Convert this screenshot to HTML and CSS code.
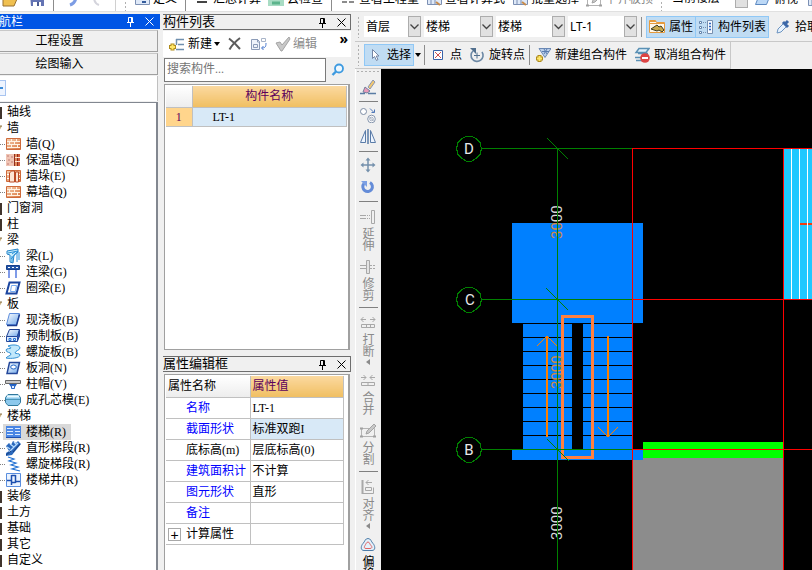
FILE: index.html
```html
<!DOCTYPE html>
<html lang="zh-CN">
   <head>
      <meta charset="UTF-8" />
      <meta name="viewport" content="width=device-width, initial-scale=1.0"/>
      <title>绘图输入 - 楼梯</title>
      <link rel="stylesheet" href="styles.css">
   </head>
   <body>
      <!-- shared icons -->
      <svg class="sprite" width="0" height="0">
         <defs>
            <linearGradient id="blueFill" x1="0" y1="0" x2="1" y2="1">
               <stop offset="0" stop-color="#ffffff"/>
               <stop offset="1" stop-color="#6fa8ea"/>
            </linearGradient>
            <linearGradient id="brickFill" x1="0" y1="0" x2="1" y2="1">
               <stop offset="0" stop-color="#f6d2b4"/>
               <stop offset="1" stop-color="#d9743c"/>
            </linearGradient>
         </defs>
         <symbol id="pin" viewBox="0 0 9 11"><path d="M2.5 6V1.5h4V6M1 6.5h7M4.5 7v4M5.5 1.5V6" fill="none" stroke="currentColor"/></symbol>
         <symbol id="close" viewBox="0 0 9 9"><path d="M.5.5l8 8M8.5.5l-8 8" fill="none" stroke="currentColor"/></symbol>
         <symbol id="chevron" viewBox="0 0 9 6"><path d="M.5.5l4 4 4-4" fill="none" stroke="#444" stroke-width="1.3"/></symbol>
         <symbol id="folder" viewBox="0 0 16 16"><path d="M2 3h13v11H2z" fill="#d8b878"/><path d="M13 3h3v12h-3z" fill="#40342c"/></symbol>
         <symbol id="folder-open" viewBox="0 0 16 16"><path d="M3 6h13l-4 7H3z" fill="#c8b080"/><path d="M3 6h13" stroke="#8a744c"/></symbol>
         <symbol id="wall" viewBox="0 0 16 16"><path d="M1.500 2.500h14v11h-14z" fill="url(#brickFill)" stroke="#cf6a3a"/><path d="M2 5.500h13M2 8.500h13M2 11.500h13M6.500 3v2.500M11.500 3v2.500M4.500 6v2.500M9.500 6v2.500M6.500 9v2.500M12.500 9v2.500" stroke="#fff3e4"/></symbol>
         <symbol id="wall-warm" viewBox="0 0 16 16"><path d="M1 2h8v12H1z" fill="#f0c4b4"/><path d="M2 3h2v2H2zM6 4h2v2H6zM3 7h2v2H3zM6 9h2v2H6zM2 11h2v2H2z" fill="#d8a094"/><path d="M9.500 2v12M12.500 2v12" stroke="#902c1c" stroke-width="1"/><path d="M13 2h2v12h-2z" fill="#d05c3c"/><path d="M10 2h2v12h-2z" fill="#e08a5c"/><path d="M10 5.500h5M10 9.500h5" stroke="#ffe6d6"/></symbol>
         <symbol id="wall-pier" viewBox="0 0 16 16"><path d="M1.500 2.500h14v11h-14z" fill="url(#brickFill)" stroke="#cf6a3a"/><path d="M2 6.500h13M2 10.500h13" stroke="#fff"/><path d="M4.500 14V5l2-2h3v11zM10.500 14V4h3v10z" fill="#fde6d4" stroke="#bb4b26"/></symbol>
         <symbol id="beam" viewBox="0 0 16 16"><path d="M2 3l11-2v3l-4 3-1 8-3-1V7L2 6z" fill="#c9eefc" stroke="#2583c8"/><path d="M3 5l10-2M7 6l4-3M7 8v6M12 5v9M14 4v8M6 11l7-8" fill="none" stroke="#2b91d9"/></symbol>
         <symbol id="beam-link" viewBox="0 0 16 16"><path d="M1.500 1.500h13v4h-13z" fill="#2456a8" stroke="#16408c"/><path d="M3 3.500h2M7 3.500h2M11 3.500h2" stroke="#fff"/><path d="M4 6v8M11 6v8" stroke="#7f9be8" stroke-width="2"/></symbol>
         <symbol id="beam-ring" viewBox="0 0 16 16"><path d="M4.500 2.500h10l-3 11h-10z" fill="#fff" stroke="#1b46a0" stroke-width="2"/><path d="M6.500 5.500h5l-1 6h-5z" fill="none" stroke="#75aaf0"/></symbol>
         <symbol id="slab" viewBox="0 0 16 16"><path d="M4.500 1.500h10l-3 11h-10z" fill="url(#blueFill)" stroke="#5c8cdc"/><path d="M2 13.500h9.500l3-11" fill="none" stroke="#1b3c90" stroke-width="1.500"/></symbol>
         <symbol id="slab-pre" viewBox="0 0 16 16"><path d="M4.500 1.500h10l-2 7h-11z" fill="url(#blueFill)" stroke="#1b3c90"/><path d="M1.500 8.500h11v5h-11z" fill="#dceafd" stroke="#24489a"/><path d="M12.500 8l2-6v6l-2 5" fill="#2b55b4" stroke="#24489a"/><path d="M4 10.500h2v2H4zM8.500 10.500h2v2h-2z" fill="none" stroke="#2575d6"/></symbol>
         <symbol id="slab-spiral" viewBox="0 0 16 16"><path d="M3 2c5-2 12-1 12 2 0 2-5 3-5 5 0 1 5 0 5 2 0 3-9 4-14 3 1-2 5-2 5-4 0-2-5-1-5-4 0-2 5-1 5-2 0-1-2-1-3-2z" fill="#c2e8fb" stroke="#3390d4"/></symbol>
         <symbol id="slab-hole" viewBox="0 0 16 16"><path d="M4.500 2.500h10l-2.500 11h-10z" fill="url(#blueFill)" stroke="#24489a" stroke-width="1.500"/><ellipse cx="8.500" cy="7" rx="2.800" ry="2" fill="#fff" stroke="#2166c8"/></symbol>
         <symbol id="col-cap" viewBox="0 0 16 16"><path d="M.500 4.500h15v3h-15z" fill="#c8c8c8" stroke="#686868"/><path d="M4 8h8l-2 3H6z" fill="#1d5fc4"/><path d="M6.500 9.500h3v3h-3z" fill="#e4f0ff" stroke="#2b66c4"/></symbol>
         <symbol id="core-mold" viewBox="0 0 16 16"><path d="M3 2.500h10l2.500 3v5l-2.500 3H3l-2.500-3v-5z" fill="#8cc8ec" stroke="#31789c"/><path d="M2 4.500h12" stroke="#e9faff" stroke-width="2"/><path d="M1 7.500h14" stroke="#4a96b8"/></symbol>
         <symbol id="stair" viewBox="0 0 16 16"><path d="M1 2h15v12H1z" fill="#4a86e4"/><path d="M2 4.500h6M2 7.500h6M2 10.500h6M10 4.500h5M10 7.500h5M10 10.500h5" stroke="#dcebff"/><path d="M1 13.500h15" stroke="#1d4fb0"/></symbol>
         <symbol id="stair-straight" viewBox="0 0 16 16"><path d="M1 6l3-3 2 2 2-4 3 2 2-2 3 3-9 11-6 1v-3l3-2z" fill="#2a68bc"/><path d="M2 7l3 2M5 4l4 3M9 2l3 3M4 12l9-9" stroke="#b8dcff" stroke-width="1.200"/><path d="M1 15l5-4M8 12l7-8" stroke="#173e80"/></symbol>
         <symbol id="stair-spiral" viewBox="0 0 16 16"><path d="M3 1l6 2-5 2 7 2-5 2 7 2-6 2 8 2" fill="none" stroke="#1f6fd2" stroke-width="1.200"/></symbol>
         <symbol id="stair-well" viewBox="0 0 16 16"><path d="M1.500 1.500h14v13h-14z" fill="#eaf3ff" stroke="#5a8ede"/><path d="M6.500 3v10M10.500 3v8M6.500 3.500h4M2 8.500h4M6.500 10.500h4M11 9.500h4" stroke="#1c4fae" stroke-width="1.500"/></symbol>
         <symbol id="new" viewBox="0 0 18 16"><path d="M8 3.500h8M10 8.500h6M8 13.500h8M8.500 3v6" stroke="#6f8fae" stroke-width="1.500"/><path d="M4.500 7.500v7M1 11h7" stroke="#b08c1c" stroke-width="4"/><path d="M4.500 8.500v5M2 11h5" stroke="#ffe76a" stroke-width="2"/></symbol>
         <symbol id="delete" viewBox="0 0 16 16"><path d="M2 2.500c4 3 8 7 11 10.500M13 2C9 5 5 9 2.500 13.500" fill="none" stroke="#5c5c5c" stroke-width="2"/></symbol>
         <symbol id="copy-item" viewBox="0 0 18 16"><path d="M1.500 3.500h6l2 2v8h-8zM7.500 3v3h2" fill="#eef3fb" stroke="#8c9cb8"/><path d="M3.500 8.500h4v3h-4z" fill="none" stroke="#8c9cb8"/><path d="M11.500 2.500h4v3h-4z" fill="none" stroke="#a8b4c8"/><path d="M16 7c0 4-1 5-4 5M13.500 10L11.500 12l2 2" fill="none" stroke="#4a7ad0"/></symbol>
         <symbol id="check" viewBox="0 0 16 16"><path d="M1 7l4-1 2 3 7-8 1 2-8 12H6z" fill="#c8c8c8" stroke="#a4a4a4"/></symbol>
         <symbol id="search" viewBox="0 0 16 16"><circle cx="9" cy="6.500" r="4" fill="#eef8ff" stroke="#3d9ae0" stroke-width="1.800"/><path d="M6 9.500L2.500 13" stroke="#3d9ae0" stroke-width="2.400"/></symbol>
         <symbol id="cursor" viewBox="0 0 16 16"><path d="M5.500 2.500v9l2-2 2 4 1.500-1-1.800-3.500H12z" fill="#fff" stroke="#7486a4"/></symbol>
         <symbol id="point" viewBox="0 0 16 16"><path d="M3.500 3.500h9v9h-9z" fill="#fff" stroke="#3a62a8"/><path d="M5 5l6 6M11 5l-6 6" stroke="#d05050"/></symbol>
         <symbol id="rotate-point" viewBox="0 0 16 16"><path d="M4 4a6 6 0 1 0 9 1" fill="none" stroke="#6c88a4" stroke-width="1.600"/><path d="M1 1h6v6z" fill="#52708e"/><path d="M8 5.500v6M5 8.500h6" stroke="#52708e"/></symbol>
         <symbol id="combine" viewBox="0 0 16 16"><path d="M4 1.500h12l-6 9z" fill="#bcd0ea" stroke="#6a88b4"/><path d="M7 4.500h7M9 2l3 5M12 2L9 7" stroke="#5a7cb0"/><path d="M4.500 8v7M1 11.500h7" stroke="#b08c1c" stroke-width="4"/><path d="M4.500 9v5M2 11.500h5" stroke="#ffe76a" stroke-width="2"/></symbol>
         <symbol id="uncombine" viewBox="0 0 16 16"><path d="M5 1.500h10l-3 4H2zM4 6.500h10M1 10.500h8M2 13.500h6" fill="#dff0fb" stroke="#5a90b4" stroke-width="1.500"/><circle cx="11" cy="11" r="4.800" fill="#dc4444"/><path d="M8 11h6" stroke="#fff" stroke-width="2"/></symbol>
         <symbol id="props" viewBox="0 0 16 16"><path d="M.500 1.500h6l1 2h8v10h-15z" fill="#fff7e8" stroke="#e59a3c"/><path d="M1 2.500h6M1 4.500h14" stroke="#e59a3c"/><path d="M2 10l6-4 2 2 2-1 3 4-2 2-3-2-2 1z" fill="#c8a84c" stroke="#3c3c24"/></symbol>
         <symbol id="list" viewBox="0 0 16 16"><path d="M1.500 2.500h2v2h-2zM1.500 7.500h2v2h-2zM1.500 12.500h2v2h-2z" fill="#fff" stroke="#6484ac"/><path d="M5 3.500h3M5 8.500h3M5 13.500h3" stroke="#7890b0" stroke-dasharray="1 1"/><path d="M9.500 1.500h5v13h-5z" fill="#f6faff" stroke="#7890b0"/><path d="M11 4.500h2M11 7.500h2M11 10.500h2" stroke="#2f66c0" stroke-width="1.500"/></symbol>
         <symbol id="dropper" viewBox="0 0 16 16"><path d="M2 14l1-4 6-6 3 3-6 6z" fill="#e8f3ff" stroke="#6c94c0"/><path d="M8 3l5 5M10 5l3-3" stroke="#3c68a8" stroke-width="3"/></symbol>
         <symbol id="brush" viewBox="0 0 16 16"><path d="M8 8l5-7 2 2-5 7z" fill="#f2c870" stroke="#8c96b0"/><path d="M5 8l5 4-3 2-4-1z" fill="#e89aba" stroke="#74809c"/><path d="M0 14.500h5M8 14.500h8" stroke="#5a7ca4" stroke-width="1.500"/></symbol>
         <symbol id="copy" viewBox="0 0 16 16"><circle cx="3.500" cy="4.500" r="3" fill="#fff" stroke="#7c8ca4"/><circle cx="11.500" cy="12" r="3.800" fill="#fff" stroke="#8494ac"/><circle cx="11.500" cy="12" r="1.800" fill="none" stroke="#a4aebe"/><path d="M9 9.500l5 5" stroke="#a4aebe"/><path d="M10 1.500l4 4M14.500 2.500v3h-3" fill="none" stroke="#5078b8"/></symbol>
         <symbol id="mirror" viewBox="0 0 16 16"><path d="M5.500 1.500v12h-5zM10.500 1.500v12h5z" fill="#eef5ff" stroke="#5a7ca8"/><path d="M8 0v15" stroke="#5a7ca8" stroke-width="1.500"/></symbol>
         <symbol id="move" viewBox="0 0 16 16"><path d="M8 2v12M2 8h12" stroke="#7490ac" stroke-width="1.500"/><path d="M5.500 3.500l2.500-3 2.500 3zM5.500 12.500l2.500 3 2.500-3zM3.500 5.500L.5 8l3 2.500zM12.500 5.500l3 2.500-3 2.500z" fill="#7490ac"/></symbol>
         <symbol id="rotate" viewBox="0 0 16 16"><path d="M4 4.500a4.800 4.800 0 1 0 6-1" fill="none" stroke="#648cd8" stroke-width="3"/><path d="M1 2h6v6z" fill="#7ca0e4"/></symbol>
         <symbol id="extend" viewBox="0 0 16 16"><path d="M11.500 1.500h3v13h-3z" fill="none" stroke="#a8a8a8"/><path d="M0 6.500h6M0 9.500h6" stroke="#a8a8a8"/><path d="M7 6.500h4M7 9.500h4" stroke="#a8a8a8" stroke-dasharray="1 1"/></symbol>
         <symbol id="trim" viewBox="0 0 16 16"><path d="M6.500 1.500h3v13h-3z" fill="#e4e4e4" stroke="#a8a8a8"/><path d="M0 6.500h6M0 9.500h6" stroke="#a8a8a8"/><path d="M10 6.500h6M10 9.500h6" stroke="#a8a8a8" stroke-dasharray="2 1"/></symbol>
         <symbol id="break" viewBox="0 0 16 16"><path d="M1 4.500h5M3.500 2L1 4.500 3.500 7M10 4.500h5M12.500 2L15 4.500 12.500 7" fill="none" stroke="#a8a8a8"/><path d="M1.500 9.500h13v3h-13zM6.500 10v2M10.500 10v2" fill="none" stroke="#a8a8a8"/></symbol>
         <symbol id="join" viewBox="0 0 16 16"><path d="M1 4.500h5M3.500 2L6 4.500 3.500 7M10 4.500h5M12.500 2L10 4.500 12.500 7" fill="none" stroke="#a8a8a8"/><path d="M1.500 9.500h13v3h-13zM8 10v2" fill="none" stroke="#a8a8a8"/></symbol>
         <symbol id="split" viewBox="0 0 16 16"><path d="M1.500 5.500h13v8h-13z" fill="none" stroke="#b4b4b4"/><path d="M0 5.500h3M0 13.500h3M13 13.500h3" stroke="#a0a0a0" stroke-width="2"/><path d="M6 11l1-3 7-7 2 2-7 7z" fill="#c8c8c8" stroke="#a4a4a4"/></symbol>
         <symbol id="align" viewBox="0 0 16 16"><path d="M2.500 1v14" stroke="#a8a8a8" stroke-width="2"/><path d="M6 3.500h6M8.500 1L6 3.500 8.500 6" fill="none" stroke="#a8a8a8"/><path d="M5.500 8.500h6v3h-6zM3 14.500h10.500v-6" fill="none" stroke="#a8a8a8"/></symbol>
         <symbol id="offset" viewBox="0 0 16 16"><path d="M8 1.500c3 0 3 3 5 5s3 7-1 7H4c-4 0-3-5-1-7s2-5 5-5z" fill="#e4f1fb" stroke="#4c7ca8"/><path d="M8 5c1.500 0 1.500 2 3 3.500s1 3-1 3H6c-2 0-2-1.500-1-3S6.500 5 8 5z" fill="none" stroke="#e06464"/></symbol>
         <symbol id="sheet" viewBox="0 0 16 16"><path d="M1.500 4.500h14v8h-14zM5 4v8M9 4v8" fill="#dfe9f8" stroke="#7c90b4"/><path d="M10 10l4 3" stroke="#c88c4c" stroke-width="2"/></symbol>
         <symbol id="define" viewBox="0 0 16 16"><path d="M1.500 3.500h14v9h-14z" fill="#dfe9f8" stroke="#7c90b4"/><path d="M8 9h4v2H8z" fill="#345c9c"/></symbol>
         <symbol id="cube" viewBox="0 0 16 16"><path d="M4.500 2.500h11l-4 10h-11z" fill="#bcd8f6" stroke="#5c88c0"/></symbol>
         <symbol id="cloud" viewBox="0 0 16 16"><path d="M0 1h16v13H0z" fill="#a8dcc4"/><path d="M4 11h8" stroke="#5cb48c" stroke-width="3"/></symbol>
         <symbol id="sum" viewBox="0 0 16 16"><path d="M3 10h10" stroke="#444" stroke-width="2"/></symbol>
         <symbol id="binoculars" viewBox="0 0 16 16"><path d="M2 9h5v2H2zM9 9h5v2H9z" fill="#8c8c8c"/></symbol>
         <symbol id="save" viewBox="0 0 16 16"><path d="M2 1h14v12H3z" fill="#6474b4"/><path d="M5 9h8v4H5z" fill="#fff"/><path d="M9 9h2v4H9z" fill="#4c5c94"/></symbol>
         <symbol id="open" viewBox="0 0 16 16"><path d="M1 6h14l-3 7H1z" fill="#f0c050" stroke="#987030"/></symbol>
         <symbol id="undo" viewBox="0 0 16 16"><path d="M12 3c0 5-3 8-6 9" fill="none" stroke="#7c9ce4" stroke-width="3"/></symbol>
         <symbol id="redo" viewBox="0 0 16 16"><path d="M4 4c0 4 2 7 5 8" fill="none" stroke="#d4d4dc" stroke-width="2"/></symbol>
      </svg>

      <header class="topbar">
         <button class="tool icon-only" aria-label="打开"><svg class="icon"><use href="#open"/></svg></button>
         <button class="tool icon-only" aria-label="保存"><svg class="icon"><use href="#save"/></svg></button>
         <span class="sep"></span>
         <button class="tool icon-only" aria-label="撤销"><svg class="icon"><use href="#undo"/></svg></button>
         <button class="tool icon-only" aria-label="恢复"><svg class="icon"><use href="#redo"/></svg></button>
         <span class="sep light"></span>
         <span class="grip"></span>
         <button class="tool"><svg class="icon"><use href="#define"/></svg>定义</button>
         <span class="sep"></span>
         <button class="tool"><svg class="icon"><use href="#sum"/></svg>汇总计算</button>
         <button class="tool"><svg class="icon"><use href="#cloud"/></svg>云检查</button>
         <span class="sep"></span>
         <button class="tool"><svg class="icon"><use href="#binoculars"/></svg>查看工程量</button>
         <button class="tool"><svg class="icon"><use href="#sheet"/></svg>查看计算式</button>
         <button class="tool"><svg class="icon"><use href="#sheet"/></svg>批量选择</button>
         <button class="tool" disabled><svg class="icon"><use href="#split"/></svg>平齐板顶</button>
         <span class="grip"></span>
         <span class="combo">
            <select aria-label="显示范围"><option>当前楼层</option></select>
            <span class="arrow"></span>
         </span>
         <button class="tool"><svg class="icon"><use href="#cube"/></svg>俯视</button>
         <button class="tool icon-only" aria-label="动态观察"><svg class="icon"><use href="#sheet"/></svg></button>
      </header>

      <div class="workspace">
         <aside class="navigator">
            <div class="nav-title">
               <h2>模块导航栏</h2>
               <button aria-label="固定"><svg width="9" height="11"><use href="#pin"/></svg></button>
               <button aria-label="关闭"><svg width="9" height="9"><use href="#close"/></svg></button>
            </div>
            <button class="nav-section">工程设置</button>
            <button class="nav-section">绘图输入</button>
            <div class="nav-tools"><button class="collapse" aria-label="全部折叠"></button></div>
            <ul class="tree">
               <li class="group"><a href="#"><svg class="icon"><use href="#folder"/></svg>轴线</a></li>
               <li class="group"><a href="#"><svg class="icon"><use href="#folder-open"/></svg>墙</a>
                  <ul>
                     <li><a href="#"><svg class="icon"><use href="#wall"/></svg>墙(Q)</a></li>
                     <li><a href="#"><svg class="icon"><use href="#wall-warm"/></svg>保温墙(Q)</a></li>
                     <li><a href="#"><svg class="icon"><use href="#wall-pier"/></svg>墙垛(E)</a></li>
                     <li><a href="#"><svg class="icon"><use href="#wall"/></svg>幕墙(Q)</a></li>
                  </ul>
               </li>
               <li class="group"><a href="#"><svg class="icon"><use href="#folder"/></svg>门窗洞</a></li>
               <li class="group"><a href="#"><svg class="icon"><use href="#folder"/></svg>柱</a></li>
               <li class="group"><a href="#"><svg class="icon"><use href="#folder-open"/></svg>梁</a>
                  <ul>
                     <li><a href="#"><svg class="icon"><use href="#beam"/></svg>梁(L)</a></li>
                     <li><a href="#"><svg class="icon"><use href="#beam-link"/></svg>连梁(G)</a></li>
                     <li><a href="#"><svg class="icon"><use href="#beam-ring"/></svg>圈梁(E)</a></li>
                  </ul>
               </li>
               <li class="group"><a href="#"><svg class="icon"><use href="#folder-open"/></svg>板</a>
                  <ul>
                     <li><a href="#"><svg class="icon"><use href="#slab"/></svg>现浇板(B)</a></li>
                     <li><a href="#"><svg class="icon"><use href="#slab-pre"/></svg>预制板(B)</a></li>
                     <li><a href="#"><svg class="icon"><use href="#slab-spiral"/></svg>螺旋板(B)</a></li>
                     <li><a href="#"><svg class="icon"><use href="#slab-hole"/></svg>板洞(N)</a></li>
                     <li><a href="#"><svg class="icon"><use href="#col-cap"/></svg>柱帽(V)</a></li>
                     <li><a href="#"><svg class="icon"><use href="#core-mold"/></svg>成孔芯模(E)</a></li>
                  </ul>
               </li>
               <li class="group"><a href="#"><svg class="icon"><use href="#folder-open"/></svg>楼梯</a>
                  <ul>
                     <li><a href="#" class="selected"><svg class="icon"><use href="#stair"/></svg>楼梯(R)</a></li>
                     <li><a href="#"><svg class="icon"><use href="#stair-straight"/></svg>直形梯段(R)</a></li>
                     <li><a href="#"><svg class="icon"><use href="#stair-spiral"/></svg>螺旋梯段(R)</a></li>
                     <li><a href="#"><svg class="icon"><use href="#stair-well"/></svg>楼梯井(R)</a></li>
                  </ul>
               </li>
               <li class="group"><a href="#"><svg class="icon"><use href="#folder"/></svg>装修</a></li>
               <li class="group"><a href="#"><svg class="icon"><use href="#folder"/></svg>土方</a></li>
               <li class="group"><a href="#"><svg class="icon"><use href="#folder"/></svg>基础</a></li>
               <li class="group"><a href="#"><svg class="icon"><use href="#folder"/></svg>其它</a></li>
               <li class="group"><a href="#"><svg class="icon"><use href="#folder"/></svg>自定义</a></li>
            </ul>
         </aside>

         <div class="panels">
            <section class="panel components">
               <div class="panel-title">
                  <h2>构件列表</h2>
                  <button aria-label="固定"><svg width="9" height="11"><use href="#pin"/></svg></button>
                  <button aria-label="关闭"><svg width="9" height="9"><use href="#close"/></svg></button>
               </div>
               <div class="panel-tools">
                  <button><svg width="18" height="16"><use href="#new"/></svg>新建<span class="caret"></span></button>
                  <button aria-label="删除"><svg class="icon"><use href="#delete"/></svg></button>
                  <button aria-label="复制"><svg width="18" height="16"><use href="#copy-item"/></svg></button>
                  <button disabled><svg class="icon"><use href="#check"/></svg>编辑</button>
                  <button class="more" aria-label="更多">»</button>
               </div>
               <div class="search">
                  <input type="text" aria-label="搜索构件" placeholder="搜索构件...">
                  <button aria-label="搜索"><svg class="icon"><use href="#search"/></svg></button>
               </div>
               <div class="box">
                  <table class="component-table">
                     <thead><tr><th class="num"></th><th>构件名称</th></tr></thead>
                     <tbody><tr><td class="num">1</td><td>LT-1</td></tr></tbody>
                  </table>
               </div>
            </section>
            <section class="panel properties">
               <div class="panel-title">
                  <h2>属性编辑框</h2>
                  <button aria-label="固定"><svg width="9" height="11"><use href="#pin"/></svg></button>
                  <button aria-label="关闭"><svg width="9" height="9"><use href="#close"/></svg></button>
               </div>
               <div class="box">
                  <table class="property-table">
                     <thead><tr><th>属性名称</th><th class="value">属性值</th></tr></thead>
                     <tbody>
                        <tr><td class="key">名称</td><td>LT-1</td></tr>
                        <tr><td class="key">截面形状</td><td class="active">标准双跑I</td></tr>
                        <tr><td>底标高(m)</td><td>层底标高(0)</td></tr>
                        <tr><td class="key">建筑面积计</td><td>不计算</td></tr>
                        <tr><td class="key">图元形状</td><td>直形</td></tr>
                        <tr><td class="key">备注</td><td></td></tr>
                        <tr><td class="expand"><button aria-label="展开">+</button>计算属性</td><td></td></tr>
                     </tbody>
                  </table>
               </div>
            </section>
         </div>

         <main class="drawing">
            <div class="toolbar">
               <span class="grip"></span>
               <span class="combo short">
                  <select aria-label="楼层"><option>首层</option></select>
                  <span class="arrow"><svg width="9" height="6"><use href="#chevron"/></svg></span>
               </span>
               <span class="combo">
                  <select aria-label="构件分类"><option>楼梯</option></select>
                  <span class="arrow"><svg width="9" height="6"><use href="#chevron"/></svg></span>
               </span>
               <span class="combo">
                  <select aria-label="构件类型"><option>楼梯</option></select>
                  <span class="arrow"><svg width="9" height="6"><use href="#chevron"/></svg></span>
               </span>
               <span class="combo">
                  <select aria-label="构件"><option>LT-1</option></select>
                  <span class="arrow"><svg width="9" height="6"><use href="#chevron"/></svg></span>
               </span>
               <span class="sep"></span>
               <div class="toggles">
                  <button class="tool on"><svg class="icon"><use href="#props"/></svg>属性</button>
                  <button class="tool on"><svg class="icon"><use href="#list"/></svg>构件列表</button>
               </div>
               <button class="tool"><svg class="icon"><use href="#dropper"/></svg>拾取构件</button>
            </div>
            <div class="toolbar modes">
               <span class="grip"></span>
               <button class="tool on pick"><svg class="icon"><use href="#cursor"/></svg>选择</button>
               <span class="caret"></span>
               <span class="sep"></span>
               <button class="tool"><svg class="icon"><use href="#point"/></svg>点</button>
               <button class="tool"><svg class="icon"><use href="#rotate-point"/></svg>旋转点</button>
               <span class="sep"></span>
               <button class="tool"><svg class="icon"><use href="#combine"/></svg>新建组合构件</button>
               <button class="tool"><svg class="icon"><use href="#uncombine"/></svg>取消组合构件</button>
            </div>
            <div class="stage">
               <div class="edit-tools">
                  <span class="grip"></span>
                  <button aria-label="删除"><svg class="icon"><use href="#brush"/></svg></button>
                  <hr>
                  <button aria-label="复制"><svg class="icon"><use href="#copy"/></svg></button>
                  <button aria-label="镜像"><svg class="icon"><use href="#mirror"/></svg></button>
                  <hr>
                  <button aria-label="移动"><svg class="icon"><use href="#move"/></svg></button>
                  <button aria-label="旋转"><svg class="icon"><use href="#rotate"/></svg></button>
                  <hr>
                  <button class="labeled" disabled><svg class="icon"><use href="#extend"/></svg><span>延伸</span></button>
                  <button class="labeled" disabled><svg class="icon"><use href="#trim"/></svg><span>修剪</span></button>
                  <hr>
                  <button class="labeled" disabled><svg class="icon"><use href="#break"/></svg><span>打断</span><i class="side"></i></button>
                  <button class="labeled" disabled><svg class="icon"><use href="#join"/></svg><span>合并</span></button>
                  <button class="labeled" disabled><svg class="icon"><use href="#split"/></svg><span>分割</span></button>
                  <hr>
                  <button class="labeled" disabled><svg class="icon"><use href="#align"/></svg><span>对齐</span><i class="side"></i></button>
                  <button class="labeled"><svg class="icon"><use href="#offset"/></svg><span>偏移</span></button>
               </div>
               <svg class="plan" role="img" aria-label="楼梯平面图">
                  <g transform="translate(-381 -69)">
                     <!-- slabs and walls -->
                     <path class="grey" d="M633 458h150v1400H633z"/>
                     <path class="lime" d="M643 442h140v16H643z"/>
                     <path class="cyan" d="M784 149h1400v150H784z"/>
                     <path class="white-line" d="M791.500 149v150M799.500 149v150M807.500 149v150"/>
                     <path class="mark" d="M800 223h7v2h-7zM808 223h30v2h-30z"/>
                     <!-- stair -->
                     <path class="blue" d="M512 223h131v100H512zM523 324h109v125H523zM512 449h131v11H512z"/>
                     <path class="step" d="M523 323.500h109M523 337.500h109M523 351.500h109M523 365.500h109M523 379.500h109M523 393.500h109M523 407.500h109M523 421.500h109M523 435.500h109"/>
                     <path d="M572 324h11v125h-11z"/>
                     <path class="well" d="M562.500 316.500h30v141h-30z"/>
                     <path class="arrow-line" d="M547 437V336M608 336v101"/>
                     <path class="arrow-head" d="M537 346l10-10 10 10M598 427l10 10 10-10"/>
                     <!-- axis dimensions -->
                     <g class="dim">
                        <text transform="translate(562 239) rotate(-90)"><tspan class="over">30</tspan>00</text>
                        <text class="over" transform="translate(562 389) rotate(-90)">3000</text>
                        <text transform="translate(562 540) rotate(-90)">3000</text>
                     </g>
                     <!-- axes -->
                     <path class="axis" d="M482 148.500h150M482 299.500h150M482 449.500h150M557.500 148v1500"/>
                     <path class="axis" d="M547 138l21 21M546 288l22 22M547 439l22 22"/>
                     <path class="red-line" d="M632 148.500h1500M632 299.500h1500M632 449.500h1500M632.500 148v1500M783.500 148v1500"/>
                     <g class="bubble">
                        <path d="M466 136.500h6l4 2 4 4 1.500 6-1.500 6-4 4-4 2.500h-6l-4-2.500-4-4-1.500-6 1.500-6 4-4z"/><text x="469" y="154">D</text>
                        <path d="M466 287.500h6l4 2 4 4 1.500 6-1.500 6-4 4-4 2.500h-6l-4-2.500-4-4-1.500-6 1.500-6 4-4z"/><text x="470" y="305">C</text>
                        <path d="M466 437.500h6l4 2 4 4 1.500 6-1.500 6-4 4-4 2.500h-6l-4-2.500-4-4-1.500-6 1.500-6 4-4z"/><text x="469" y="455">B</text>
                     </g>
                  </g>
               </svg>
            </div>
         </main>
      </div>
   </body>
</html>
```
FILE: styles.css
```css
* {
box-sizing: border-box;
}
body {
margin: 0;
height: 100vh;
overflow: hidden;
display: flex;
flex-direction: column;
background-color: #f0f0f0;
color: #000;
font-family: "Noto Sans", "Noto Sans CJK SC", sans-serif;
font-size: 12px;
line-height: 16px;
}
button, input, select {
font: inherit;
color: inherit;
}
button {
border: none;
background: none;
padding: 0;
display: flex;
align-items: center;
justify-content: center;
flex-shrink: 0;
white-space: nowrap;
}
button:disabled {
color: #8a8a8a;
}
h2 {
margin: 0;
font-size: 12px;
font-weight: normal;
}
a {
color: inherit;
text-decoration: none;
}
ul {
list-style: none;
margin: 0;
padding: 0;
}
.sprite {
position: absolute;
}
.icon {
width: 16px;
height: 16px;
flex-shrink: 0;
}
.sep {
width: 1px;
height: 20px;
background-color: #8c8c8c;
flex-shrink: 0;
}
.sep.light {
background-color: #d0d0d0;
}
.grip {
width: 3px;
height: 22px;
flex-shrink: 0;
background-image: radial-gradient(circle, #b0b0b0 1px, transparent 1px);
background-size: 3px 4px;
}
.caret {
border: 3px solid transparent;
border-top: 4px solid #000;
border-bottom: none;
}
.tool {
gap: 4px;
}

/* main toolbar */
.topbar {
height: 12px;
flex-shrink: 0;
overflow: hidden;
display: flex;
align-items: flex-end;
gap: 7px;
background-color: #fff;
border-bottom: 1px solid #e0e0e0;
}
.topbar .tool {
gap: 3px;
padding-bottom: 4px;
}
.topbar .icon-only {
width: 19px;
}
.topbar .icon {
margin-bottom: -2px;
}
.topbar .sep {
margin: 0 1px;
}
.topbar .combo {
width: 78px;
height: 20px;
margin-bottom: 3px;
}

/* drop-down boxes */
.combo {
display: grid;
grid-template-columns: 1fr 13px;
width: 69px;
height: 21px;
flex-shrink: 0;
background-color: #fff;
}
.combo.short {
width: 57px;
}
.combo select {
grid-area: 1 / 1 / 2 / 3;
appearance: none;
border: none;
background: none;
padding: 0 14px 0 2px;
min-width: 0;
outline: none;
}
.combo .arrow {
grid-area: 1 / 2;
display: flex;
align-items: center;
justify-content: center;
background-color: #e1e1e1;
border: 1px solid #adadad;
pointer-events: none;
}

.workspace {
flex: 1;
min-height: 0;
display: flex;
}

/* module navigator, its left edge is scrolled out of the window */
.navigator {
width: 199px;
margin: 2px 0 0 -39px;
flex-shrink: 0;
display: flex;
flex-direction: column;
font-family: "Liberation Serif", "Noto Sans CJK SC", serif;
}
.nav-title {
height: 15px;
display: flex;
align-items: center;
gap: 10px;
padding: 0 6px 0 2px;
background-color: #0055e5;
color: #fff;
}
.nav-title h2, .panel-title h2 {
flex: 1;
}
.nav-section {
height: 22px;
margin: 1px 2px 0 0;
border: 1px solid #a0a0a0;
border-top-color: #c8c8c8;
}
.nav-tools {
height: 25px;
margin: 1px 2px 1px 0;
padding: 4px 0 0 29px;
background-color: #fff;
border-right: 1px solid #c0c0c0;
}
.collapse {
width: 16px;
height: 16px;
border: 1px solid #a8c4f0;
background: linear-gradient(#3c8cd8, #3c8cd8) center / 10px 2px no-repeat #eef4fe;
}
.tree {
flex: 1;
min-height: 0;
overflow: hidden;
margin-right: 2px;
padding: 1px 0 0 25px;
background-color: #fff;
border: 1px solid #828790;
border-width: 1px 2px 0 0;
}
.tree a {
display: flex;
align-items: center;
gap: 5px;
height: 16px;
}
.tree ul a {
width: max-content;
margin-left: 17px;
padding: 0 5px 0 2px;
}
.tree ul li {
display: flex;
background: repeating-linear-gradient(90deg, #808080 0 1px, transparent 1px 2px) 14px 8px / 6px 1px no-repeat;
}
.tree a.selected {
background-color: #d9d9d9;
}

/* docked panels */
.panels {
width: 188px;
margin: 2px 4px 0 3px;
flex-shrink: 0;
display: flex;
flex-direction: column;
gap: 6px;
font-family: "Liberation Serif", "Noto Sans CJK SC", serif;
}
.panel {
display: flex;
flex-direction: column;
min-height: 0;
}
.components {
flex: 336 1 0;
}
.properties {
flex: 214 1 0;
}
.panel-title {
height: 16px;
flex-shrink: 0;
display: flex;
align-items: center;
gap: 10px;
padding-right: 4px;
border: 1px solid #6e6e6e;
border-left: none;
}
.panel-title h2 {
font-size: 13px;
}
.panel-tools {
height: 26px;
margin: 1px 0;
display: flex;
align-items: center;
gap: 7px;
padding: 0 3px 0 5px;
background-color: #fff;
font-family: "Noto Sans", "Noto Sans CJK SC", sans-serif;
}
.panel-tools button {
gap: 2px;
}
.panel-tools .more {
margin-left: auto;
align-self: flex-start;
font-weight: bold;
font-size: 14px;
}
.search {
display: flex;
margin: 0 1px 2px;
height: 24px;
}
.search input {
width: 162px;
padding: 0 2px 2px;
border: 1px solid #7a7a7a;
background-color: #fff;
}
.search input::placeholder {
color: #757575;
opacity: 1;
}
.search button {
flex: 1;
}
.box {
flex: 1;
min-height: 0;
overflow: hidden;
margin: 0 1px;
padding: 1px;
background-color: #fff;
border: 1px solid #a0a0a0;
border-right-width: 2px;
}
.properties .box {
margin-top: 2px;
border-bottom: none;
}
table {
border-collapse: collapse;
table-layout: fixed;
width: 100%;
}
th, td {
border: 1px solid #c0c0c0;
border-width: 0 1px 1px 0;
padding: 0 2px;
height: 21px;
font-weight: normal;
text-align: left;
white-space: nowrap;
overflow: hidden;
}
th {
background: linear-gradient(#ffffff, #ededed);
}
.component-table th {
text-align: center;
color: #5c005c;
}
.component-table th + th, .property-table .value {
background: linear-gradient(#fbd9a0, #f0bf62);
color: #5c005c;
}
.component-table td {
height: 19px;
padding-left: 20px;
background-color: #d8e9f7;
}
.component-table .num {
width: 26px;
}
.component-table td.num {
padding: 0;
text-align: center;
background-color: #ffd58c;
color: #5c005c;
}
.property-table {
width: 178px;
}
.property-table th:first-child {
width: 84px;
}
.property-table td:first-child {
padding: 0 0 0 20px;
}
.property-table .key {
color: #0000ff;
}
.property-table .active {
background-color: #d8e9f7;
}
.property-table td.expand {
padding-left: 2px;
}
.expand button {
display: inline-flex;
width: 13px;
height: 13px;
margin-right: 5px;
border: 1px solid #a8a8a8;
vertical-align: middle;
font: 14px/10px "Liberation Sans", sans-serif;
}

/* drawing area */
.drawing {
flex: 1;
min-width: 0;
display: flex;
flex-direction: column;
overflow: hidden;
}
.toolbar {
height: 30px;
flex-shrink: 0;
display: flex;
align-items: center;
gap: 3px;
padding-left: 2px;
border-bottom: 1px solid #c8c8c8;
}
.toolbar > .grip {
margin-right: 1px;
}
.toolbar .sep {
margin: 0 1px;
}
.toggles {
display: flex;
margin-right: 3px;
}
.tool.on {
height: 22px;
padding: 0 2px;
background-color: #c0dcf3;
border: 1px solid #90c8f6;
}
.tool.on + .tool.on {
border-left: none;
}
.modes {
height: 27px;
align-self: flex-start;
padding-right: 4px;
border-right: 1px solid #c8c8c8;
}
.modes .sep {
margin-right: 2px;
}
.modes .tool + .tool {
margin-left: 4px;
}
.modes .caret {
margin: 0 -1px 0 -2px;
}
.stage {
flex: 1;
min-height: 0;
display: flex;
}
.edit-tools {
width: 26px;
flex-shrink: 0;
display: flex;
flex-direction: column;
overflow: hidden;
padding: 1px 1px 0 0;
border-left: 1px solid #fff;
}
.edit-tools .grip {
width: 24px;
height: 3px;
margin-bottom: 3px;
background-size: 4px 3px;
}
.edit-tools button {
flex-direction: column;
padding: 3px 0;
}
.edit-tools .labeled {
padding-top: 5px;
gap: 2px;
}
.edit-tools .labeled span {
writing-mode: vertical-rl;
font-family: "Noto Sans CJK SC", sans-serif;
line-height: 16px;
}
.edit-tools hr {
width: 19px;
height: 1px;
flex-shrink: 0;
margin: 3px auto 2px;
border: none;
background-color: #808080;
}
.side {
border: 3px solid transparent;
border-right: 4px solid #8a8a8a;
border-left: none;
}
.plan {
flex: 1;
min-width: 0;
height: 100%;
background-color: #000;
}

.plan path {
shape-rendering: crispEdges;
}
.grey { fill: #8c8c8c; }
.lime { fill: #00ff00; }
.cyan { fill: #1fc8ff; }
.mark { fill: #f03c10; }
.blue { fill: #0080ff; }
.white-line { stroke: #fff; }
.step { stroke: #000; }
.well { fill: none; stroke: #ff8040; stroke-width: 3; }
.arrow-line { stroke: #ff8000; stroke-width: 2; }
.arrow-head { fill: none; stroke: #ff8000; }
.axis { stroke: #008000; }
.red-line { stroke: #ff0000; }
.dim {
font: 15px Roboto, sans-serif;
fill: #d8d8d8;
}
.dim .over {
fill: #d08848;
}
.bubble path {
fill: none;
stroke: #008000;
}
.bubble text {
font: 15px Roboto, sans-serif;
fill: #e8e8e8;
text-anchor: middle;
}
```
